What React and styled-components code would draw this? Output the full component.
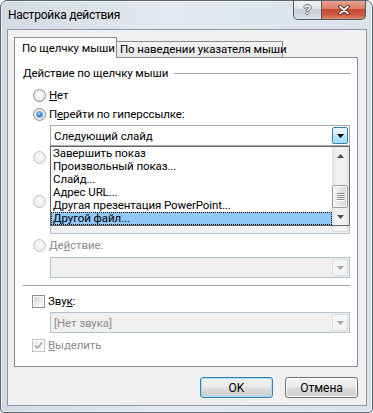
import React from "react";
import styled, { createGlobalStyle, css } from "styled-components";

const Page = createGlobalStyle`
  html, body { margin: 0; padding: 0; background: #fff; }
  body {
    font-family: Roboto, "Noto Sans", sans-serif;
    font-size: 11.5px;
    letter-spacing: -0.1px;
    color: #000;
  }
`;

const Window = styled.div`
  width: 373px;
  height: 413px;
  box-sizing: border-box;
  border: 1px solid #5a636e;
  border-radius: 7px 7px 4px 4px;
  background: linear-gradient(90deg, #d2dbe5 0%, #e4e9ef 45%, #dae2ea 100%);
  box-shadow: inset 0 0 0 1px rgba(255, 255, 255, 0.55);
  display: flex;
  flex-direction: column;
  overflow: hidden;
`;

const TitleBar = styled.div`
  height: 28px;
  display: flex;
  align-items: flex-start;
  padding-left: 7px;
`;

const Title = styled.span`
  line-height: 28px;
  font-size: 12px;
  letter-spacing: -0.25px;
`;

const CaptionButtons = styled.div`
  margin-left: auto;
  margin-right: 6px;
  margin-top: -1px;
  display: flex;
`;

const CaptionButton = styled.div`
  height: 20px;
  box-sizing: border-box;
  border: 1px solid #4f5964;
  border-top: none;
  display: flex;
  align-items: center;
  justify-content: center;
  ${p => p.$close ? css`
    width: 44px;
    border-left: none;
    border-radius: 0 0 5px 0;
    background: linear-gradient(#e9a898 0%, #dc7f69 45%, #c74a33 50%, #cf5a40 80%, #e08f6f 100%);
  ` : css`
    width: 29px;
    border-radius: 0 0 0 5px;
    background: linear-gradient(#f3f5f7 0%, #e1e6eb 45%, #c8d0d8 50%, #d3dae1 85%, #e3e8ed 100%);
  `}
`;

const HelpGlyph = styled.span`
  font-family: "Liberation Sans", sans-serif;
  font-weight: bold;
  font-size: 13px;
  line-height: 13px;
  color: #f4f6f8;
  text-shadow: 1px 0 #6a737d, -1px 0 #6a737d, 0 1px #6a737d, 0 -1px #6a737d;
`;

const Client = styled.div`
  flex: 1;
  margin: 0 5px 6px 6px;
  background: #f0f0f0;
  border: 1px solid #8e99a5;
  display: flex;
  flex-direction: column;
  padding: 7px 8px 0 6px;
`;

const TabStrip = styled.div`
  display: flex;
  align-items: flex-end;
  height: 20px;
  position: relative;
  z-index: 2;
`;

const Tab = styled.div`
  box-sizing: border-box;
  border: 1px solid #898c95;
  border-bottom: none;
  line-height: 15px;
  white-space: nowrap;
  ${p => p.$active ? css`
    width: 103px;
    height: 21px;
    margin-bottom: -1px;
    background: #fff;
    padding: 3px 0 0 7px;
    position: relative;
    z-index: 1;
  ` : css`
    width: 167px;
    height: 16px;
    margin-left: -1px;
    background: linear-gradient(#f4f4f4, #e6e6e6);
    padding: 0 0 0 3px;
  `}
`;

const Panel = styled.div`
  box-sizing: border-box;
  width: 344px;
  height: 310px;
  border: 1px solid #898c95;
  background: #fff;
  padding: 8px 7px 0 8px;
  display: flex;
  flex-direction: column;
`;

const GroupHeader = styled.div`
  display: flex;
  align-items: center;
  gap: 6px;
  height: 15px;
  line-height: 15px;
  white-space: nowrap;
  &::after {
    content: "";
    flex: 1;
    height: 1px;
    background: #a0a0a0;
  }
`;

const Separator = styled.div`
  height: 1px;
  background: #a0a0a0;
  margin-top: ${p => p.$mt || 0}px;
`;

const OptionRow = styled.div`
  display: flex;
  align-items: center;
  gap: 3px;
  height: 18px;
  margin-left: ${p => p.$ml ?? 10}px;
  margin-top: ${p => p.$mt || 0}px;
  color: ${p => p.$disabled ? "#8d8d8d" : "#000"};
  white-space: nowrap;
`;

const Mn = styled.span`
  text-decoration: underline;
`;

const RadioMark = styled.span`
  width: 13px;
  height: 13px;
  box-sizing: border-box;
  flex: none;
  border-radius: 50%;
  border: 1px solid ${p => p.$disabled ? "#c3c3c3" : "#8e8f8f"};
  background: ${p => p.$disabled
    ? "radial-gradient(circle at 50% 45%, #fbfbfb 0%, #f0f0f0 55%, #e2e2e2 100%)"
    : "radial-gradient(circle at 50% 45%, #fdfdfd 0%, #ececec 55%, #cfcfcf 100%)"};
  display: flex;
  align-items: center;
  justify-content: center;
  ${p => p.$checked && css`
    &::before {
      content: "";
      width: 5px;
      height: 5px;
      border-radius: 50%;
      background: radial-gradient(circle at 40% 35%, #9bd8fb 0%, #2d7fc4 55%, #16497a 100%);
      box-shadow: 0 0 0 1px #6ea6d3;
    }
  `}
`;

const CheckMark = styled.span`
  width: 13px;
  height: 13px;
  box-sizing: border-box;
  flex: none;
  border: 1px solid ${p => p.$disabled ? "#c5c5c5" : "#8e8f8f"};
  background: #fff;
  padding: 1px;
  display: flex;
  & > span {
    flex: 1;
    display: flex;
    align-items: center;
    justify-content: center;
    background: ${p => p.$disabled
      ? "linear-gradient(135deg, #ececec, #fafafa)"
      : "linear-gradient(135deg, #d6d6d6, #fdfdfd)"};
  }
`;

const Combo = styled.div`
  box-sizing: border-box;
  width: ${p => p.$w || 300}px;
  height: 21px;
  margin-left: ${p => p.$ml ?? 27}px;
  margin-top: ${p => p.$mt || 0}px;
  border: 1px solid ${p => p.$disabled ? "#b5c2d0" : "#a7abb2"};
  background: ${p => p.$disabled ? "#f0f0f0" : "#fff"};
  padding: 1px;
  display: flex;
  align-items: center;
  position: relative;
  flex: none;
`;

const ComboText = styled.span`
  flex: 1;
  padding-left: 2px;
  color: ${p => p.$disabled ? "#8d8d8d" : "#000"};
  white-space: nowrap;
`;

const ComboButton = styled.span`
  width: 16px;
  height: 17px;
  box-sizing: border-box;
  border-radius: 2px;
  display: flex;
  align-items: center;
  justify-content: center;
  ${p => p.$hot ? css`
    border: 1px solid #3c7fb1;
    background: linear-gradient(#eaf6fd 0%, #d9f0fc 45%, #bee6fd 50%, #a7d9f5 100%);
  ` : css`
    border: 1px solid #dadcdf;
    background: #f4f4f4;
  `}
`;

const RowLine = styled.div`
  display: flex;
  gap: 6px;
  margin-left: 27px;
  margin-top: ${p => p.$mt || 0}px;
`;

const BrowseButton = styled.div`
  box-sizing: border-box;
  width: 75px;
  height: 21px;
  border: 1px solid #adb2b5;
  border-radius: 3px;
  background: #f4f4f4;
`;

const DropList = styled.div`
  position: absolute;
  left: -1px;
  top: calc(100% + 1px);
  width: 300px;
  height: 80px;
  box-sizing: border-box;
  border: 1px solid #646464;
  background: #fff;
  display: flex;
  z-index: 5;
`;

const Items = styled.div`
  flex: 1;
  display: flex;
  flex-direction: column;
`;

const Item = styled.div`
  height: 13px;
  line-height: 13px;
  padding-left: 2px;
  box-sizing: border-box;
  white-space: nowrap;
  ${p => p.$selected && css`
    background: #91c8f6;
    outline: 1px dotted #000;
    outline-offset: -1px;
  `}
`;

const ScrollBar = styled.div`
  width: 17px;
  display: flex;
  flex-direction: column;
  background: linear-gradient(90deg, #e3e3e3 0%, #f2f2f2 25%, #f2f2f2 75%, #e6e6e6 100%);
`;

const ScrollArrow = styled.div`
  height: 17px;
  display: flex;
  align-items: center;
  justify-content: center;
`;

const ScrollTrack = styled.div`
  flex: 1;
  display: flex;
  flex-direction: column;
  justify-content: flex-end;
  padding: 0 1px 0 0;
`;

const Thumb = styled.div`
  height: 23px;
  box-sizing: border-box;
  border: 1px solid #999;
  border-radius: 2px;
  background: linear-gradient(90deg, #f5f5f5 0%, #e6e6e6 50%, #d6d6d6 100%);
  box-shadow: inset 0 0 0 1px #fafafa;
  display: flex;
  flex-direction: column;
  align-items: center;
  justify-content: center;
  gap: 1px;
  & > i {
    width: 7px;
    height: 1px;
    background: #8a8a8a;
    box-shadow: 0 1px #fff;
  }
`;

const Footer = styled.div`
  display: flex;
  justify-content: flex-end;
  gap: 12px;
  margin-top: 10px;
`;

const DialogButton = styled.button`
  width: 73px;
  height: 21px;
  box-sizing: border-box;
  font: inherit;
  font-size: 12px;
  color: #000;
  padding: 0;
  border-radius: 3px;
  border: 1px solid ${p => p.$default ? "#3c7fb1" : "#707070"};
  background: linear-gradient(#f2f2f2 0%, #ebebeb 48%, #dddddd 52%, #cfcfcf 100%);
  box-shadow: inset 0 0 0 1px ${p => p.$default ? "#9fe3fb" : "#fcfcfc"};
`;

const Arrow = ({ up, color = "#000" }) => (
  <svg width="7" height="4" viewBox="0 0 7 4">
    <path d={up ? "M3.5 0L7 4H0Z" : "M0 0H7L3.5 4Z"} fill={color} />
  </svg>
);

const Radio = ({ checked, disabled, children, mt }) => (
  <OptionRow $mt={mt} $disabled={disabled}>
    <RadioMark $checked={checked} $disabled={disabled} />
    {children && <span>{children}</span>}
  </OptionRow>
);

const Check = ({ checked, disabled, children, mt }) => (
  <OptionRow $ml={9} $mt={mt} $disabled={disabled}>
    <CheckMark $disabled={disabled}>
      <span>
        {checked && (
          <svg width="9" height="9" viewBox="0 0 9 9">
            <path d="M1 4.5L3.5 7L8 1.5" fill="none" stroke="#a9a9a9" strokeWidth="1.6" />
          </svg>
        )}
      </span>
    </CheckMark>
    <span>{children}</span>
  </OptionRow>
);

const links = [
  "Завершить показ",
  "Произвольный показ...",
  "Слайд...",
  "Адрес URL...",
  "Другая презентация PowerPoint...",
  "Другой файл...",
];

export default function App() {
  return (
    <>
      <Page />
      <Window>
        <TitleBar>
          <Title>Настройка действия</Title>
          <CaptionButtons>
            <CaptionButton>
              <HelpGlyph>?</HelpGlyph>
            </CaptionButton>
            <CaptionButton $close>
              <svg width="12" height="10" viewBox="0 0 12 10">
                <path d="M2 1.5L10 8.5M10 1.5L2 8.5" stroke="#4a1c12" strokeWidth="3.6" strokeLinecap="round" />
                <path d="M2 1.5L10 8.5M10 1.5L2 8.5" stroke="#fff" strokeWidth="1.8" strokeLinecap="round" />
              </svg>
            </CaptionButton>
          </CaptionButtons>
        </TitleBar>

        <Client>
          <TabStrip>
            <Tab $active>По щелчку мыши</Tab>
            <Tab>По наведении указателя мыши</Tab>
          </TabStrip>

          <Panel>
            <GroupHeader>Действие по щелчку мыши</GroupHeader>

            <Radio mt={5}><Mn>Н</Mn>ет</Radio>
            <Radio checked mt={1}>П<Mn>е</Mn>рейти по гиперссылке:</Radio>
            <Combo $mt={2}>
              <ComboText>Следующий слайд</ComboText>
              <ComboButton $hot><Arrow /></ComboButton>
              <DropList>
                <Items>
                  {links.map((l, i) => (
                    <Item key={l} $selected={i === links.length - 1}>{l}</Item>
                  ))}
                </Items>
                <ScrollBar>
                  <ScrollArrow><Arrow up color="#4f4f4f" /></ScrollArrow>
                  <ScrollTrack>
                    <Thumb><i /><i /><i /><i /></Thumb>
                  </ScrollTrack>
                  <ScrollArrow><Arrow color="#4f4f4f" /></ScrollArrow>
                </ScrollBar>
              </DropList>
            </Combo>

            <Radio disabled mt={2} />
            <RowLine $mt={3}>
              <Combo $disabled $w={219} $ml={0} />
              <BrowseButton />
            </RowLine>

            <Radio disabled mt={2} />
            <Combo $disabled $mt={3}>
              <ComboText $disabled />
              <ComboButton><Arrow color="#a8a8a8" /></ComboButton>
            </Combo>

            <Radio disabled mt={2}>Де<Mn>й</Mn>ствие:</Radio>
            <Combo $disabled $mt={3}>
              <ComboText $disabled />
              <ComboButton><Arrow color="#a8a8a8" /></ComboButton>
            </Combo>

            <Separator $mt={7} />

            <Check mt={6}>Зву<Mn>к</Mn>:</Check>
            <Combo $disabled $mt={2}>
              <ComboText $disabled>[Нет звука]</ComboText>
              <ComboButton><Arrow color="#a8a8a8" /></ComboButton>
            </Combo>
            <Check checked disabled mt={3}><Mn>В</Mn>ыделить</Check>
          </Panel>

          <Footer>
            <DialogButton $default>OK</DialogButton>
            <DialogButton>Отмена</DialogButton>
          </Footer>
        </Client>
      </Window>
    </>
  );
}
